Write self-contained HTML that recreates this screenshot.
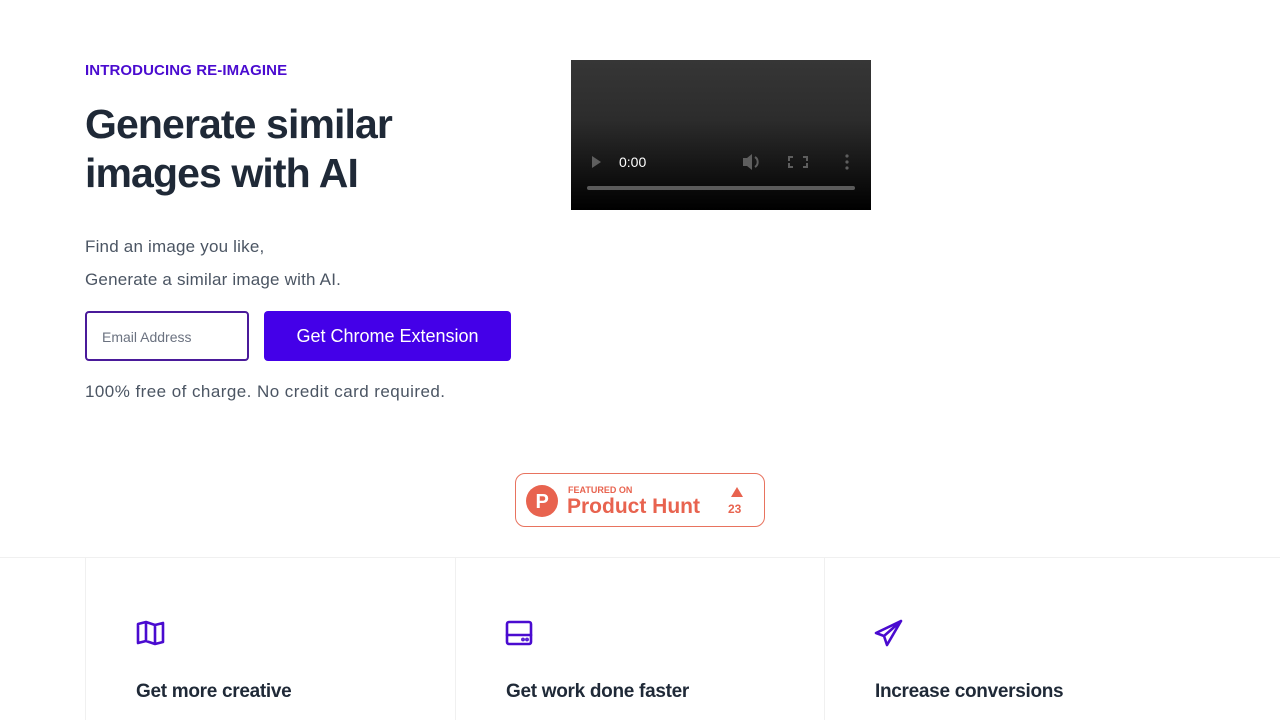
<!DOCTYPE html>
<html><head><meta charset="utf-8">
<style>
*{margin:0;padding:0;box-sizing:border-box}
body{width:1280px;height:720px;overflow:hidden;background:#fff;font-family:"Liberation Sans",sans-serif;position:relative}
.abs{position:absolute}
.intro{left:85px;top:62px;color:#4a0bd0;font-size:15px;font-weight:700;letter-spacing:0.1px}
h1{position:absolute;left:85px;top:100px;font-size:41px;line-height:49px;color:#1f2937;font-weight:700;letter-spacing:-0.9px}
.p{left:85px;color:#4b5563;font-size:17px}
.email{left:85px;top:311px;width:164px;height:50px;border:2px solid #4a1a9a;border-radius:4px;color:#6b7280;font-size:14px;padding:16px 0 0 15px}
.btn{left:264px;top:311px;width:247px;height:50px;background:#4400e8;border-radius:4px;color:#fff;font-size:18px;text-align:center;line-height:50px}
.video{left:571px;top:60px;width:300px;height:150px;background:linear-gradient(#363636 0%,#2c2c2c 40%,#000 100%)}
.ph{left:515px;top:473px;width:250px;height:54px;border:1px solid #e8735f;border-radius:10px}
.line{background:#f0f0f0}
.icon{stroke:#4a0bd0;fill:none;stroke-width:2.6;stroke-linecap:round;stroke-linejoin:round}
.ft{top:681px;font-size:19px;font-weight:700;color:#1f2937;letter-spacing:-0.3px}
</style></head><body>
<div class="abs intro">INTRODUCING RE-IMAGINE</div>
<h1>Generate similar<br>images with AI</h1>
<div class="abs p" style="top:237px;letter-spacing:0.2px">Find an image you like,</div>
<div class="abs p" style="top:270px;letter-spacing:0.2px">Generate a similar image with AI.</div>
<div class="abs email">Email Address</div>
<div class="abs btn">Get Chrome Extension</div>
<div class="abs p" style="top:382px;letter-spacing:0.45px">100% free of charge. No credit card required.</div>

<div class="abs video">
<svg width="300" height="150" style="position:absolute;left:0;top:0">
<polygon points="21,96 21,108 30,102" fill="#5e5e5e"/>
<text x="48" y="107" fill="#fff" font-size="14" font-family="Liberation Sans">0:00</text>
<polygon points="172,98 176,98 181,94 181,110 176,106 172,106" fill="#5e5e5e"/>
<path d="M184,97 a6,6 0 0 1 0,10" stroke="#5e5e5e" stroke-width="2" fill="none"/>
<path d="M222,97 h-4 v4 M232,97 h4 v4 M222,107 h-4 v-4 M232,107 h4 v-4" stroke="#5e5e5e" stroke-width="2" fill="none"/>
<circle cx="276" cy="96" r="1.6" fill="#5e5e5e"/><circle cx="276" cy="102" r="1.6" fill="#5e5e5e"/><circle cx="276" cy="108" r="1.6" fill="#5e5e5e"/>
<rect x="16" y="126" width="268" height="4" rx="2" fill="#5a5a5a"/>
</svg>
</div>

<div class="abs ph">
<svg width="250" height="54" style="position:absolute;left:0;top:0">
<circle cx="26" cy="27" r="16" fill="#e8634f"/>
<text x="19.5" y="34" fill="#fff" font-size="20" font-weight="bold" font-family="Liberation Sans">P</text>
<text x="52" y="19" fill="#e8634f" font-size="9" font-weight="bold" font-family="Liberation Sans">FEATURED ON</text>
<text x="51" y="39" fill="#e8634f" font-size="21" font-weight="bold" font-family="Liberation Sans">Product Hunt</text>
<polygon points="215,23 221,13 227,23" fill="#e8634f"/>
<text x="212" y="39" fill="#e8634f" font-size="12" font-weight="bold" font-family="Liberation Sans">23</text>
</svg>
</div>

<div class="abs line" style="left:0;top:557px;width:1280px;height:1px"></div>
<div class="abs line" style="left:85px;top:557px;width:1px;height:163px"></div>
<div class="abs line" style="left:455px;top:557px;width:1px;height:163px"></div>
<div class="abs line" style="left:824px;top:557px;width:1px;height:163px"></div>

<svg class="abs icon" style="left:136px;top:620px" width="30" height="26" viewBox="0 0 30 26">
<path d="M2,4 L10,2 L19,5 L27,3 V22 L19,24 L10,21 L2,23 Z M10,2 V21 M19,5 V24"/>
</svg>
<svg class="abs icon" style="left:505px;top:620px" width="28" height="26" viewBox="0 0 28 26">
<rect x="2" y="2" width="24" height="22" rx="2"/><path d="M2,15 H26"/>
<circle cx="18" cy="19.5" r="0.6" fill="#4a0bd0"/><circle cx="22" cy="19.5" r="0.6" fill="#4a0bd0"/>
</svg>
<svg class="abs icon" style="left:874px;top:619px" width="30" height="28" viewBox="0 0 30 28">
<path d="M27,2 L2,14 L10,17 L13,26 Z M10,17 L27,2"/>
</svg>

<div class="abs ft" style="left:136px">Get more creative</div>
<div class="abs ft" style="left:506px">Get work done faster</div>
<div class="abs ft" style="left:875px">Increase conversions</div>
</body></html>
